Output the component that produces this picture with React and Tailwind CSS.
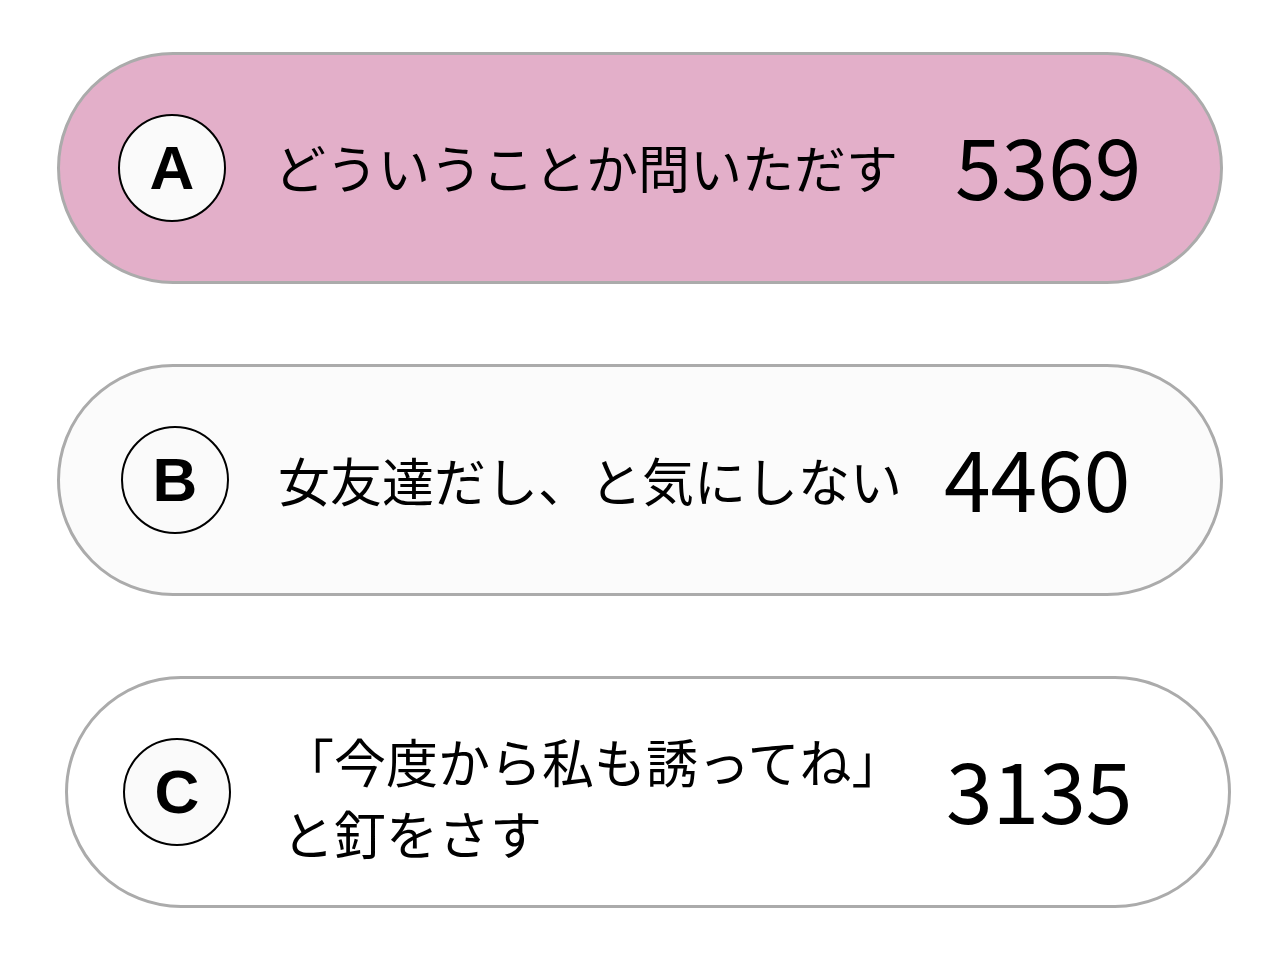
const CHOICES = [
  {
    letter: "A",
    lines: ["どういうことか問いただす"],
    count: "5369",
    card: "ml-[57px] pl-[58px] bg-[#e3afc9]",
    textGap: "ml-[48px] -mt-[3px]",
    countGap: "ml-[55px]",
  },
  {
    letter: "B",
    lines: ["女友達だし、と気にしない"],
    count: "4460",
    card: "ml-[57px] pl-[61px] bg-[#fbfbfb]",
    textGap: "ml-[49px]",
    countGap: "ml-[40px]",
  },
  {
    letter: "C",
    lines: ["「今度から私も誘ってね」", "と釘をさす"],
    count: "3135",
    card: "ml-[65px] pl-[55px] bg-white",
    textGap: "ml-[51px] mt-[10px]",
    countGap: "ml-[38px]",
  },
];

const jp = { fontFamily: '"Noto Sans CJK JP", "Noto Sans", sans-serif' };

function ChoiceCard({ choice }) {
  return (
    <div
      className={`flex items-center w-[1166px] h-[232px] rounded-full border-[3px] border-[#ababab] box-border ${choice.card}`}
    >
      <div className="flex items-center justify-center shrink-0 w-[108px] h-[108px] rounded-full border-2 border-black bg-[#fafafa]">
        <span
          className="text-[62px] font-bold leading-none text-black"
          style={{ fontFamily: '"Liberation Sans", Arial, sans-serif' }}
        >
          {choice.letter}
        </span>
      </div>
      <div
        className={`w-[626px] shrink-0 text-[52px] leading-[72px] text-black whitespace-nowrap ${choice.textGap}`}
        style={jp}
      >
        {choice.lines.map((line) => (
          <div key={line}>{line}</div>
        ))}
      </div>
      <div className={`text-[84px] leading-none text-black mb-[8px] ${choice.countGap}`} style={jp}>
        {choice.count}
      </div>
    </div>
  );
}

export default function App() {
  return (
    <div className="w-[1280px] h-[958px] bg-white pt-[52px] flex flex-col gap-[80px] overflow-hidden">
      {CHOICES.map((c) => (
        <ChoiceCard key={c.letter} choice={c} />
      ))}
    </div>
  );
}
